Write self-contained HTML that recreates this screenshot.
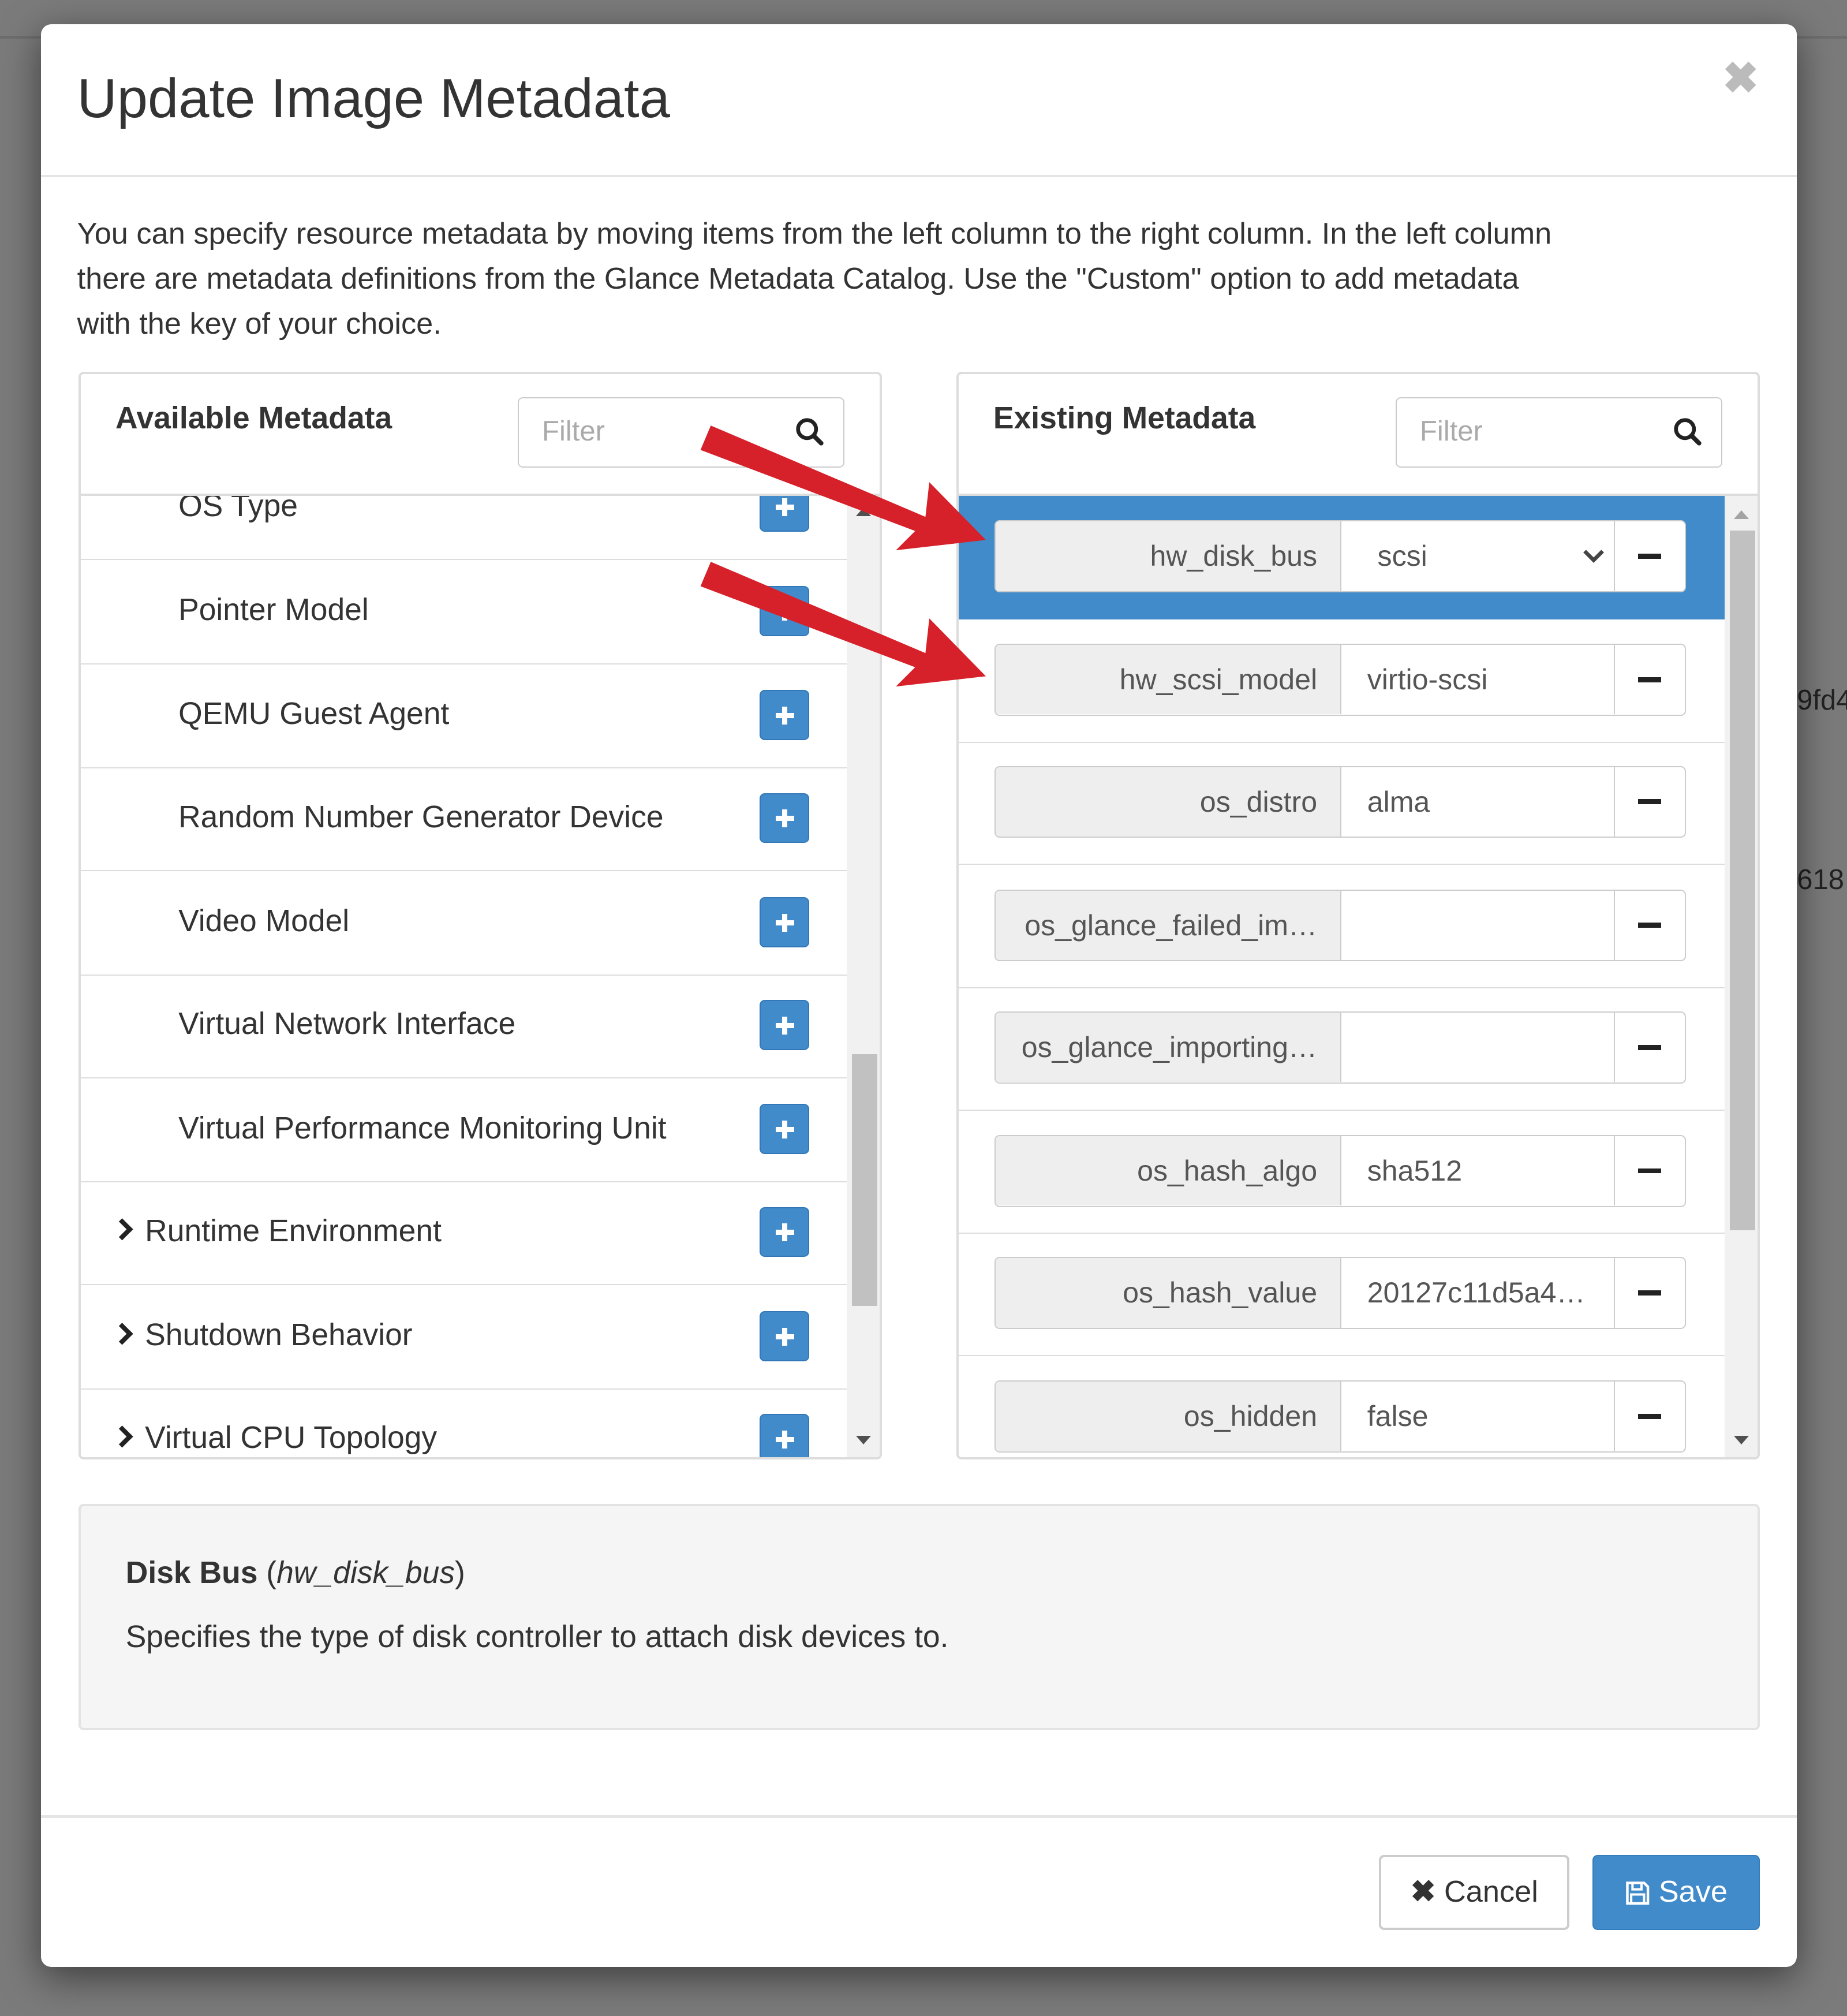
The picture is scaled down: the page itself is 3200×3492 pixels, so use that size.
<!DOCTYPE html>
<html><head><meta charset="utf-8"><style>
*{box-sizing:border-box;margin:0;padding:0}
html,body{width:3200px;height:3492px;overflow:hidden;background:#7a7a7a}
#w{zoom:2.2269;width:1437px;height:1568px;position:relative;font-family:"Liberation Sans",sans-serif;color:#333;background:#7b7b7b}
.a{position:absolute}
.modal{left:32px;top:19px;width:1366px;height:1511px;background:#fff;border-radius:8px;box-shadow:0 8px 30px rgba(0,0,0,.5)}
.row{position:absolute;left:0;width:596px;height:81px;border-bottom:1px solid #ddd;font-size:24px;color:#333}
.row span{position:absolute;top:25px}
.plus{position:absolute;left:528px;top:20px;width:39px;height:39px;background:#428bca;border:1px solid #3278b8;border-radius:4px}
.plus:before{content:"";position:absolute;left:12px;top:17px;width:14px;height:4px;background:#fff}
.plus:after{content:"";position:absolute;left:17px;top:12px;width:4px;height:14px;background:#fff}
.rrow{position:absolute;left:0;width:596px;height:96px;border-bottom:1px solid #ddd}
.ig{position:absolute;left:28px;top:19px;width:538px;height:56px;border:1px solid #ccc;border-radius:4px;background:#fff;font-size:22.5px;overflow:hidden}
.ig .k{position:absolute;left:0;top:0;width:269px;height:54px;background:#eee;border-right:1px solid #ccc;text-align:right;padding-right:18px;line-height:54px;color:#555;white-space:nowrap}
.ig .v{position:absolute;left:289px;top:0;line-height:54px;color:#555}
.ig .m{position:absolute;left:481px;top:0;width:56px;height:54px;border-left:1px solid #ccc}
.ig .m:before{content:"";position:absolute;left:18px;top:25px;width:18px;height:4px;background:#222}
.filter{position:absolute;width:254px;height:55px;border:1px solid #ccc;border-radius:4px;font-size:22px;color:#aaa;padding:13px 18px}
.chev{display:inline-block;width:12px;height:12px;border-right:4px solid #222;border-bottom:4px solid #222;transform:rotate(-45deg);margin-right:12px;position:relative;top:-3px}
</style></head><body><div id="w">
<div class="a" style="left:0;top:28px;width:1437px;height:2px;background:#6e6e6e"></div>
<div class="a" style="left:1398px;top:532px;font-size:22px;color:#222">9fd4</div>
<div class="a" style="left:1398px;top:672px;font-size:22px;color:#222">618</div>
<div class="a modal">
<div class="a" style="left:28px;top:33px;font-size:43px;color:#333">Update Image Metadata</div>
<div class="a" style="left:1308px;top:22px;font-size:34px;color:#bbb;font-weight:bold">✖</div>
<div class="a" style="left:0;top:117px;width:1366px;height:2px;background:#e5e5e5"></div>
<div class="a" style="left:28px;top:146px;width:1165px;font-size:23.5px;line-height:35px;color:#333">You can specify resource metadata by moving items from the left column to the right column. In the left column there are metadata definitions from the Glance Metadata Catalog. Use the "Custom" option to add metadata with the key of your choice.</div>

<!-- left panel -->
<div class="a" style="left:29px;top:270px;width:625px;height:846px;border:2px solid #ddd;border-radius:4px;overflow:hidden">
 <div class="a" style="left:27px;top:21px;font-size:24px;font-weight:bold">Available Metadata</div>
 <div class="filter" style="left:340px;top:18px">Filter<svg class="a" style="right:14px;top:14px" width="24" height="24" viewBox="0 0 24 24"><circle cx="10" cy="10" r="7" fill="none" stroke="#222" stroke-width="3"/><path d="M15 15l6 6" stroke="#222" stroke-width="3.5" stroke-linecap="round"/></svg></div>
 <div class="a" style="left:0;top:93px;width:623px;height:2px;background:#ddd"></div>
 <div class="a" style="left:0;top:95px;width:596px;height:751px;overflow:hidden">
  <div class="row" style="top:-31px"><span style="left:76px">OS Type</span><div class="plus"></div></div>
  <div class="row" style="top:50px"><span style="left:76px">Pointer Model</span><div class="plus"></div></div>
  <div class="row" style="top:131px"><span style="left:76px">QEMU Guest Agent</span><div class="plus"></div></div>
  <div class="row" style="top:211px"><span style="left:76px">Random Number Generator Device</span><div class="plus"></div></div>
  <div class="row" style="top:292px"><span style="left:76px">Video Model</span><div class="plus"></div></div>
  <div class="row" style="top:372px"><span style="left:76px">Virtual Network Interface</span><div class="plus"></div></div>
  <div class="row" style="top:453px"><span style="left:76px">Virtual Performance Monitoring Unit</span><div class="plus"></div></div>
  <div class="row" style="top:533px"><span style="left:26px"><i class="chev"></i>Runtime Environment</span><div class="plus"></div></div>
  <div class="row" style="top:614px"><span style="left:26px"><i class="chev"></i>Shutdown Behavior</span><div class="plus"></div></div>
  <div class="row" style="top:694px"><span style="left:26px"><i class="chev"></i>Virtual CPU Topology</span><div class="plus"></div></div>
 </div>
 <div class="a" style="left:596px;top:95px;width:27px;height:751px;background:#f1f1f1"></div>
 <div class="a" style="left:600px;top:529px;width:20px;height:196px;background:#c1c1c1"></div>
 <div class="a" style="left:603px;top:104px;border:6px solid transparent;border-bottom:7px solid #505050;border-top:0"></div>
 <div class="a" style="left:603px;top:826px;border:6px solid transparent;border-top:7px solid #505050;border-bottom:0"></div>
</div>

<!-- right panel -->
<div class="a" style="left:712px;top:270px;width:625px;height:846px;border:2px solid #ddd;border-radius:4px;overflow:hidden">
 <div class="a" style="left:27px;top:21px;font-size:24px;font-weight:bold">Existing Metadata</div>
 <div class="filter" style="left:340px;top:18px">Filter<svg class="a" style="right:14px;top:14px" width="24" height="24" viewBox="0 0 24 24"><circle cx="10" cy="10" r="7" fill="none" stroke="#222" stroke-width="3"/><path d="M15 15l6 6" stroke="#222" stroke-width="3.5" stroke-linecap="round"/></svg></div>
 <div class="a" style="left:0;top:93px;width:623px;height:2px;background:#ddd"></div>
 <div class="a" style="left:0;top:95px;width:596px;height:751px;overflow:hidden">
  <div class="rrow" style="top:0;background:#428bca;border-bottom:none"><div class="ig"><div class="k">hw_disk_bus</div><div class="v" style="left:297px">scsi</div><svg class="a" style="left:456px;top:20px" width="18" height="14" viewBox="0 0 18 14"><path d="M2 3l7 7 7-7" fill="none" stroke="#444" stroke-width="3"/></svg><div class="m"></div></div></div>
  <div class="rrow" style="top:96px"><div class="ig"><div class="k">hw_scsi_model</div><div class="v">virtio-scsi</div><div class="m"></div></div></div>
  <div class="rrow" style="top:191px"><div class="ig"><div class="k">os_distro</div><div class="v">alma</div><div class="m"></div></div></div>
  <div class="rrow" style="top:287px"><div class="ig"><div class="k">os_glance_failed_im…</div><div class="v"></div><div class="m"></div></div></div>
  <div class="rrow" style="top:382px"><div class="ig"><div class="k">os_glance_importing…</div><div class="v"></div><div class="m"></div></div></div>
  <div class="rrow" style="top:478px"><div class="ig"><div class="k">os_hash_algo</div><div class="v">sha512</div><div class="m"></div></div></div>
  <div class="rrow" style="top:573px"><div class="ig"><div class="k">os_hash_value</div><div class="v">20127c11d5a4…</div><div class="m"></div></div></div>
  <div class="rrow" style="top:669px"><div class="ig"><div class="k">os_hidden</div><div class="v">false</div><div class="m"></div></div></div>
 </div>
 <div class="a" style="left:596px;top:95px;width:27px;height:751px;background:#f1f1f1"></div>
 <div class="a" style="left:600px;top:122px;width:20px;height:544px;background:#c1c1c1"></div>
 <div class="a" style="left:603px;top:106px;border:6px solid transparent;border-bottom:7px solid #a3a3a3;border-top:0"></div>
 <div class="a" style="left:603px;top:826px;border:6px solid transparent;border-top:7px solid #505050;border-bottom:0"></div>
</div>

<!-- description -->
<div class="a" style="left:29px;top:1151px;width:1308px;height:176px;background:#f5f5f5;border:2px solid #e3e3e3;border-radius:4px">
 <div class="a" style="left:35px;top:38px;font-size:24px"><b>Disk Bus</b> (<i>hw_disk_bus</i>)</div>
 <div class="a" style="left:35px;top:88px;font-size:24px">Specifies the type of disk controller to attach disk devices to.</div>
</div>
<div class="a" style="left:0;top:1393px;width:1366px;height:2px;background:#e5e5e5"></div>
<div class="a" style="left:1041px;top:1424px;width:148px;height:58px;border:2px solid #ccc;border-radius:4px;font-size:23.5px;line-height:54px;text-align:center;color:#333"><b>✖</b> Cancel</div>
<div class="a" style="left:1207px;top:1424px;width:130px;height:58px;background:#428bca;border:1px solid #357ebd;border-radius:4px;font-size:23.5px;line-height:56px;text-align:center;color:#fff"><svg style="vertical-align:-3px" width="20" height="20" viewBox="0 0 20 20"><path d="M2 2h13l3 3v13H2z" fill="none" stroke="#fff" stroke-width="2"/><path d="M6 2v5h7V2M5 11h10v7H5z" fill="none" stroke="#fff" stroke-width="1.8"/></svg> Save</div>
</div>

<!-- arrows -->
<svg class="a" style="left:0;top:0" width="1437" height="1568">
 <g fill="#d6212a">
  <path d="M553 331 L720 402 L723 375 L767 420 L697 428 L712 413 L545 350 Z"/>
  <path d="M553 437 L720 508 L723 481 L767 526 L697 534 L712 519 L545 456 Z"/>
 </g>
</svg>
</div></body></html>
